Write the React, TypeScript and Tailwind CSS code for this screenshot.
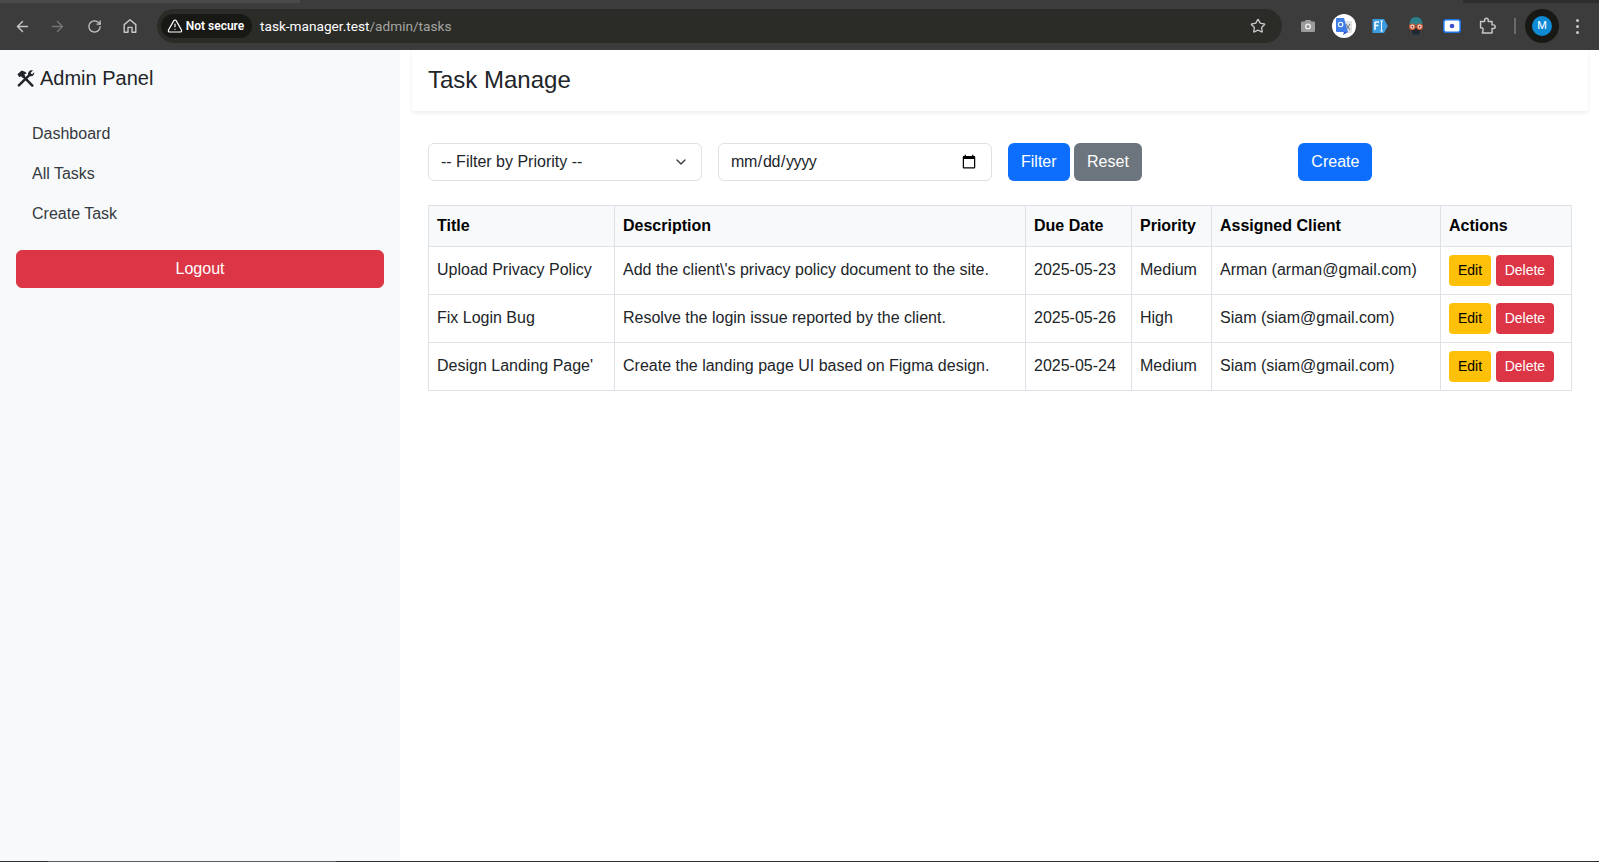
import { ArrowLeft, ArrowRight, ChevronDown, RotateCw, Star, TriangleAlert } from 'lucide-react';

interface Task {
  title: string;
  description: string;
  due: string;
  priority: string;
  client: string;
}

const tasks: Task[] = [
  {
    title: 'Upload Privacy Policy',
    description: "Add the client\\'s privacy policy document to the site.",
    due: '2025-05-23',
    priority: 'Medium',
    client: 'Arman (arman@gmail.com)',
  },
  {
    title: 'Fix Login Bug',
    description: 'Resolve the login issue reported by the client.',
    due: '2025-05-26',
    priority: 'High',
    client: 'Siam (siam@gmail.com)',
  },
  {
    title: "Design Landing Page'",
    description: 'Create the landing page UI based on Figma design.',
    due: '2025-05-24',
    priority: 'Medium',
    client: 'Siam (siam@gmail.com)',
  },
];

const navItems = ['Dashboard', 'All Tasks', 'Create Task'];
const headers = ['Title', 'Description', 'Due Date', 'Priority', 'Assigned Client', 'Actions'];

function ToolsIcon() {
  return (
    <svg viewBox="0 0 20 20" className="w-[19px] h-[19px] shrink-0 text-[#212529] mr-[5px]">
      <path d="M7 7 L17.2 17.4" stroke="currentColor" strokeWidth="2.6" strokeLinecap="round" />
      <path d="M1.5 5.5 L6 1.5 L10 3.2 L11.2 5 L8.6 5.4 L9.6 7.2 L7 9.6 L5.4 7.6 L3.6 8.6 Z" fill="currentColor" />
      <path d="M14 6.4 L3 17.2" stroke="currentColor" strokeWidth="2.6" strokeLinecap="round" />
      <path d="M17.8 1.6 L15.4 4 L16 5 L17 5.6 L19.2 3.4 C19.6 6 17.6 8.2 14.8 7.6 L12.6 6 C12.2 3.2 15 .8 17.8 1.6 Z" fill="currentColor" />
    </svg>
  );
}

function HomeIcon() {
  return (
    <svg viewBox="0 0 16 16" fill="none" stroke="#c7c7c7" strokeWidth="1.4" className="w-4 h-4">
      <path d="M2.2 14.2 V6.6 L8 1.8 L13.8 6.6 V14.2 H10 V9.4 H6 V14.2 Z" strokeLinejoin="round" />
    </svg>
  );
}

function CameraIcon() {
  return (
    <svg viewBox="0 0 16 16" className="w-4 h-4">
      <path d="M1 4.5 Q1 3.4 2.2 3.4 H4.6 L5.6 2 H10.4 L11.4 3.4 H13.8 Q15 3.4 15 4.5 V13 Q15 14 13.8 14 H2.2 Q1 14 1 13 Z" fill="#9b9b9b" />
      <circle cx="8" cy="8.6" r="3" fill="#eeeeee" />
      <circle cx="8" cy="8.6" r="1.5" fill="#8a8a8a" />
    </svg>
  );
}

function TranslateIcon() {
  return (
    <div className="w-6 h-6 rounded-full bg-white flex items-center justify-center">
      <svg viewBox="0 0 20 20" className="w-5 h-5">
        <rect x="9" y="5" width="9" height="12" rx="1" fill="#dfe3e6" />
        <path d="M12 8 L16 14 M16 8 L12 14" stroke="#777" strokeWidth="1" />
        <path d="M2 3 Q2 2 3 2 H10 L14 16 H3 Q2 16 2 15 Z" fill="#3f7ee8" />
        <circle cx="6.6" cy="8.5" r="2.2" fill="none" stroke="#fff" strokeWidth="1.1" />
        <path d="M10 16 L9 19 L14 16 Z" fill="#2a56c6" />
      </svg>
    </div>
  );
}

function FontIcon() {
  return (
    <svg viewBox="0 0 16 16" className="w-4 h-4">
      <path d="M.5 1 H12 L15.8 8 L12 15 H.5 Z" fill="#3b9be0" />
      <path d="M3 4 H7 M3 4 V12 M3 7.6 H6.4" stroke="#fff" strokeWidth="1.5" fill="none" />
      <path d="M9.6 3 V13 M8.4 3 H10.8 M8.4 13 H10.8" stroke="#fff" strokeWidth="1" fill="none" />
    </svg>
  );
}

function GlassesIcon() {
  return (
    <svg viewBox="0 0 16 16" className="w-[18px] h-[18px]">
      <path d="M2.2 7.5 Q2.4 0 8 0 T13.8 7.5 Z" fill="#2a7f8c" />
      <path d="M3.6 10 H12.4 L10.8 15.6 H5.2 Z" fill="#1e2a30" />
      <circle cx="4.8" cy="8.6" r="2.4" fill="#f6dccb" stroke="#d4502f" strokeWidth="1" />
      <circle cx="11.2" cy="8.6" r="2.4" fill="#f6dccb" stroke="#d4502f" strokeWidth="1" />
      <circle cx="4.8" cy="8.6" r=".8" fill="#5a3a30" />
      <circle cx="11.2" cy="8.6" r=".8" fill="#5a3a30" />
    </svg>
  );
}

function ScreenIcon() {
  return (
    <svg viewBox="0 0 16 16" className="w-[18px] h-[18px]">
      <rect x=".7" y="2.4" width="14.6" height="11.2" rx="2" fill="#fff" stroke="#1a73e8" strokeWidth="1.4" />
      <circle cx="8" cy="8" r="2.1" fill="#3f51c8" />
    </svg>
  );
}

function PuzzleIcon() {
  return (
    <svg viewBox="0 0 16 16" fill="none" stroke="#c7c7c7" strokeWidth="1.3" className="w-[18px] h-[18px]">
      <path
        d="M1.4 4 H5 V2.8 A1.6 1.6 0 0 1 8.2 2.8 V4 H11.6 V7 H12.8 A1.6 1.6 0 0 1 12.8 10.2 H11.6 V14.2 H3 L3.6 12 A1.8 1.8 0 0 0 1.4 9.6 Z"
        strokeLinejoin="round"
      />
    </svg>
  );
}

function ToolbarSlot({ children }: { children: React.ReactNode }) {
  return <div className="w-9 h-9 shrink-0 flex items-center justify-center">{children}</div>;
}

function BrowserBar() {
  return (
    <div className="h-[50px] shrink-0 bg-[#3c3c3c] relative flex items-center pl-1 pt-[2px]">
      <div className="absolute left-0 top-0 h-[3px] w-[300px] bg-[#4a4a4a]" />
      <div className="absolute left-[1463px] top-0 h-[3px] w-[136px] bg-[#2e2e2e]" />
      <ToolbarSlot>
        <ArrowLeft className="w-[17px] h-[17px] text-[#c7c7c7]" strokeWidth={2} />
      </ToolbarSlot>
      <ToolbarSlot>
        <ArrowRight className="w-[17px] h-[17px] text-[#757575] -ml-[1px]" strokeWidth={2} />
      </ToolbarSlot>
      <ToolbarSlot>
        <RotateCw className="w-[15px] h-[15px] text-[#c7c7c7]" strokeWidth={2} />
      </ToolbarSlot>
      <ToolbarSlot>
        <HomeIcon />
      </ToolbarSlot>

      <div className="ml-[9px] w-[1125px] h-[34px] shrink-0 rounded-full bg-[#2b2c28] flex items-center pl-[4px] pr-[16px] font-['Roboto',sans-serif]">
        <div className="h-6 w-[91px] rounded-full bg-[#181815] flex items-center justify-center gap-[3px] pr-[2px] text-white text-[12px] font-semibold">
          <TriangleAlert className="w-4 h-4" strokeWidth={1.8} />
          Not secure
        </div>
        <span className="ml-2 text-[13.65px] text-white">
          task-manager.test<span className="text-[#a4a4a0]">/admin/tasks</span>
        </span>
        <Star className="ml-auto w-4 h-4 text-[#c7c7c7]" strokeWidth={2} />
      </div>

      <div className="ml-2 flex items-center">
        <ToolbarSlot>
          <CameraIcon />
        </ToolbarSlot>
        <ToolbarSlot>
          <TranslateIcon />
        </ToolbarSlot>
        <ToolbarSlot>
          <FontIcon />
        </ToolbarSlot>
        <ToolbarSlot>
          <GlassesIcon />
        </ToolbarSlot>
        <ToolbarSlot>
          <ScreenIcon />
        </ToolbarSlot>
        <ToolbarSlot>
          <PuzzleIcon />
        </ToolbarSlot>
        <div className="ml-2 w-[2px] h-[16px] bg-[#6a6a6a]" />
        <div className="ml-[9px] w-[34px] h-[34px] rounded-full bg-[#181815] flex items-center justify-center">
          <div className="w-5 h-5 rounded-full bg-[#0f8bd6] text-white text-[11px] flex items-center justify-center font-['Roboto',sans-serif]">
            M
          </div>
        </div>
        <div className="ml-[17px] flex flex-col gap-[3px]">
          <span className="w-[3px] h-[3px] rounded-full bg-[#c7c7c7]" />
          <span className="w-[3px] h-[3px] rounded-full bg-[#c7c7c7]" />
          <span className="w-[3px] h-[3px] rounded-full bg-[#c7c7c7]" />
        </div>
      </div>
    </div>
  );
}

function Sidebar() {
  return (
    <aside className="w-[400px] shrink-0 bg-[#f8f9fa] p-4">
      <h5 className="flex items-center text-[20px] leading-6 text-[#212529] mb-6">
        <ToolsIcon />
        Admin Panel
      </h5>
      <nav className="flex flex-col">
        {navItems.map((item) => (
          <a key={item} className="h-10 px-4 flex items-center text-[#343a40]">
            {item}
          </a>
        ))}
      </nav>
      <button className="mt-4 w-full h-[38px] rounded-md bg-[#dc3545] text-white border border-[#dc3545]">
        Logout
      </button>
    </aside>
  );
}

function FilterBar() {
  return (
    <div className="flex items-center">
      <div className="relative w-[274px] h-[38px]">
        <select className="w-full h-full appearance-none bg-white border border-[#dee2e6] rounded-md pl-3 pr-9 text-[#212529]">
          <option>-- Filter by Priority --</option>
        </select>
        <ChevronDown className="absolute right-[13px] top-[11px] w-4 h-4 text-[#343a40] pointer-events-none" strokeWidth={2} />
      </div>
      <input
        type="date"
        className="ml-4 w-[274px] h-[38px] bg-white border border-[#dee2e6] rounded-md pl-[11px] pr-3 text-[#212529] tracking-[-0.4px]"
      />
      <button className="ml-4 h-[38px] px-[13px] rounded-md bg-[#0d6efd] text-white">Filter</button>
      <button className="ml-1 h-[38px] px-[13.5px] rounded-md bg-[#6c757d] text-white">Reset</button>
      <button className="ml-[156px] h-[38px] px-[13px] rounded-md bg-[#0d6efd] text-white">Create</button>
    </div>
  );
}

function TaskTable() {
  const cell = 'border border-[#dee2e6] pl-2 pr-2 pt-2 pb-[10px]';
  return (
    <table className="mt-6 w-[1143px] table-fixed border-collapse text-[#212529]">
      <colgroup>
        <col className="w-[186px]" />
        <col className="w-[411px]" />
        <col className="w-[106px]" />
        <col className="w-[80px]" />
        <col className="w-[229px]" />
        <col className="w-[131px]" />
      </colgroup>
      <thead>
        <tr>
          {headers.map((h) => (
            <th key={h} className="border border-[#dee2e6] bg-[#f8f9fa] p-2 text-left font-bold text-black leading-6">
              {h}
            </th>
          ))}
        </tr>
      </thead>
      <tbody>
        {tasks.map((task) => (
          <tr key={task.title}>
            <td className={cell}>{task.title}</td>
            <td className={cell}>{task.description}</td>
            <td className={cell}>{task.due}</td>
            <td className={cell}>{task.priority}</td>
            <td className={cell}>{task.client}</td>
            <td className="border border-[#dee2e6] p-2">
              <div className="flex gap-[4.5px]">
                <button className="h-[31px] px-[9px] rounded-[4px] bg-[#ffc107] text-black text-[14px]">Edit</button>
                <button className="h-[31px] px-[9px] rounded-[4px] bg-[#dc3545] text-white text-[14px]">Delete</button>
              </div>
            </td>
          </tr>
        ))}
      </tbody>
    </table>
  );
}

export default function App() {
  return (
    <div className="h-[862px] w-[1599px] overflow-hidden flex flex-col bg-white font-['Liberation_Sans',Arial,sans-serif] text-base">
      <BrowserBar />
      <div className="flex-1 flex min-h-0">
        <Sidebar />
        <main className="flex-1 pl-3 pr-[13px]">
          <div className="h-[61px] px-4 pb-[2px] flex items-center bg-white shadow-[0_2px_4px_rgba(0,0,0,0.075)]">
            <h4 className="text-2xl text-[#212529]">Task Manage</h4>
          </div>
          <div className="px-4 pt-8">
            <FilterBar />
            <TaskTable />
          </div>
        </main>
      </div>
      <div className="h-[1px] shrink-0 flex bg-[#2e2e2e]">
        <div className="ml-[48px] w-[288px] bg-[#5a5a5a]" />
      </div>
    </div>
  );
}
